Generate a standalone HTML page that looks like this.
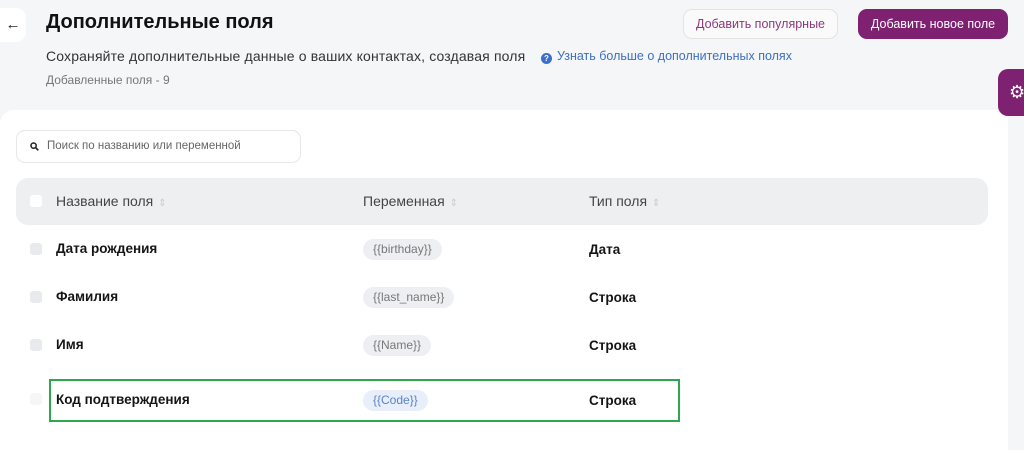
<!DOCTYPE html>
<html><head><meta charset="utf-8"><style>
*{margin:0;padding:0;box-sizing:border-box}
body{width:1024px;height:438px;overflow:hidden;background:#f5f6f8;font-family:"Liberation Sans","DejaVu Sans",sans-serif;position:relative;color:#111}
.a{position:absolute}
.back{left:0;top:8px;width:26px;height:34px;background:#fff;border-radius:0 10px 10px 0;font-size:15px;line-height:34px;text-align:center;color:#222}
h1{position:absolute;left:46px;top:11px;font-size:20px;font-weight:bold;color:#111}
.sub{left:46px;top:48px;font-size:14px;letter-spacing:0.15px;color:#333}
.link{left:541px;top:49px;font-size:12.5px;color:#3e6fc4}
.link i{display:inline-block;width:11px;height:11px;border-radius:50%;background:#3a6fd0;color:#fff;font-size:8px;font-style:normal;text-align:center;line-height:11px;font-weight:bold;margin-right:5px;vertical-align:-1px}
.cnt{left:46px;top:73px;font-size:12px;color:#777}
.b1{left:683px;top:9px;width:155px;height:30px;border:1px solid #e2e3e6;border-radius:9px;background:#fafafb;font-size:12.5px;color:#8a3a7c;text-align:center;line-height:28px}
.b2{left:858px;top:9px;width:150px;height:30px;border-radius:9px;background:#7d2170;font-size:12.5px;color:#fff;text-align:center;line-height:30px}
.gear{left:998px;top:69px;width:30px;height:47px;border-radius:10px 0 0 10px;background:#7d2170;color:#fff;font-size:18px;line-height:47px;padding-left:11px;font-family:"DejaVu Sans",sans-serif}
.card{left:0;top:110px;width:1008px;height:340px;background:#fff;border-radius:14px 0 0 0}
.search{left:16px;top:130px;width:285px;height:33px;border:1px solid #e6e7ea;border-radius:9px;font-size:11.5px;color:#666;line-height:31px;padding-left:30px}
.search svg{position:absolute;left:13px;top:11px}
.head{left:16px;top:178px;width:972px;height:47px;background:#eeeff1;border-radius:12px}
.cb{position:absolute;width:12px;height:12px;border-radius:3px;background:#e9eaed}
.t{position:absolute;font-size:13.5px;font-weight:bold;color:#151515}
.h{color:#444;font-size:14px;font-weight:normal}
.s{color:#ccc;font-size:10px;margin-left:5px}
.pill{position:absolute;height:21px;border-radius:11px;background:#eeeff2;font-size:12px;color:#777;line-height:21px;padding:0 10px}
.green{left:49px;top:379px;width:631px;height:43px;border:2.5px solid #2ea84a}
</style></head><body>
<div class="a back">←</div>
<h1>Дополнительные поля</h1>
<div class="a sub">Сохраняйте дополнительные данные о ваших контактах, создавая поля</div>
<div class="a link"><i>?</i>Узнать больше о дополнительных полях</div>
<div class="a cnt">Добавленные поля - 9</div>
<div class="a b1">Добавить популярные</div>
<div class="a b2">Добавить новое поле</div>
<div class="a card"></div>
<div class="a gear">⚙</div>
<div class="a search"><svg width="9" height="9" viewBox="0 0 9 9"><circle cx="3.6" cy="3.6" r="2.6" fill="none" stroke="#222" stroke-width="1.5"/><path d="M5.5 5.5L8.3 8.3" stroke="#222" stroke-width="1.6"/></svg>Поиск по названию или переменной</div>
<div class="a head"></div>
<div class="cb" style="left:30px;top:195px;background:#fff"></div>
<div class="t h" style="left:56px;top:193px">Название поля<span class="s">⇕</span></div>
<div class="t h" style="left:363px;top:193px">Переменная<span class="s">⇕</span></div>
<div class="t h" style="left:589px;top:193px">Тип поля<span class="s">⇕</span></div>

<div class="cb" style="left:30px;top:243px"></div>
<div class="t" style="left:56px;top:241px">Дата рождения</div>
<div class="pill" style="left:363px;top:239px">{{birthday}}</div>
<div class="t" style="left:589px;top:242px">Дата</div>

<div class="cb" style="left:30px;top:291px"></div>
<div class="t" style="left:56px;top:289px">Фамилия</div>
<div class="pill" style="left:363px;top:287px">{{last_name}}</div>
<div class="t" style="left:589px;top:290px">Строка</div>

<div class="cb" style="left:30px;top:339px"></div>
<div class="t" style="left:56px;top:337px">Имя</div>
<div class="pill" style="left:363px;top:335px">{{Name}}</div>
<div class="t" style="left:589px;top:338px">Строка</div>

<div class="cb" style="left:30px;top:393px;background:#f6f6f8"></div>
<div class="t" style="left:56px;top:392px">Код подтверждения</div>
<div class="pill" style="left:363px;top:390px;background:#e9effa;color:#5a82c8">{{Code}}</div>
<div class="t" style="left:589px;top:393px">Строка</div>
<div class="a green"></div>
</body></html>
